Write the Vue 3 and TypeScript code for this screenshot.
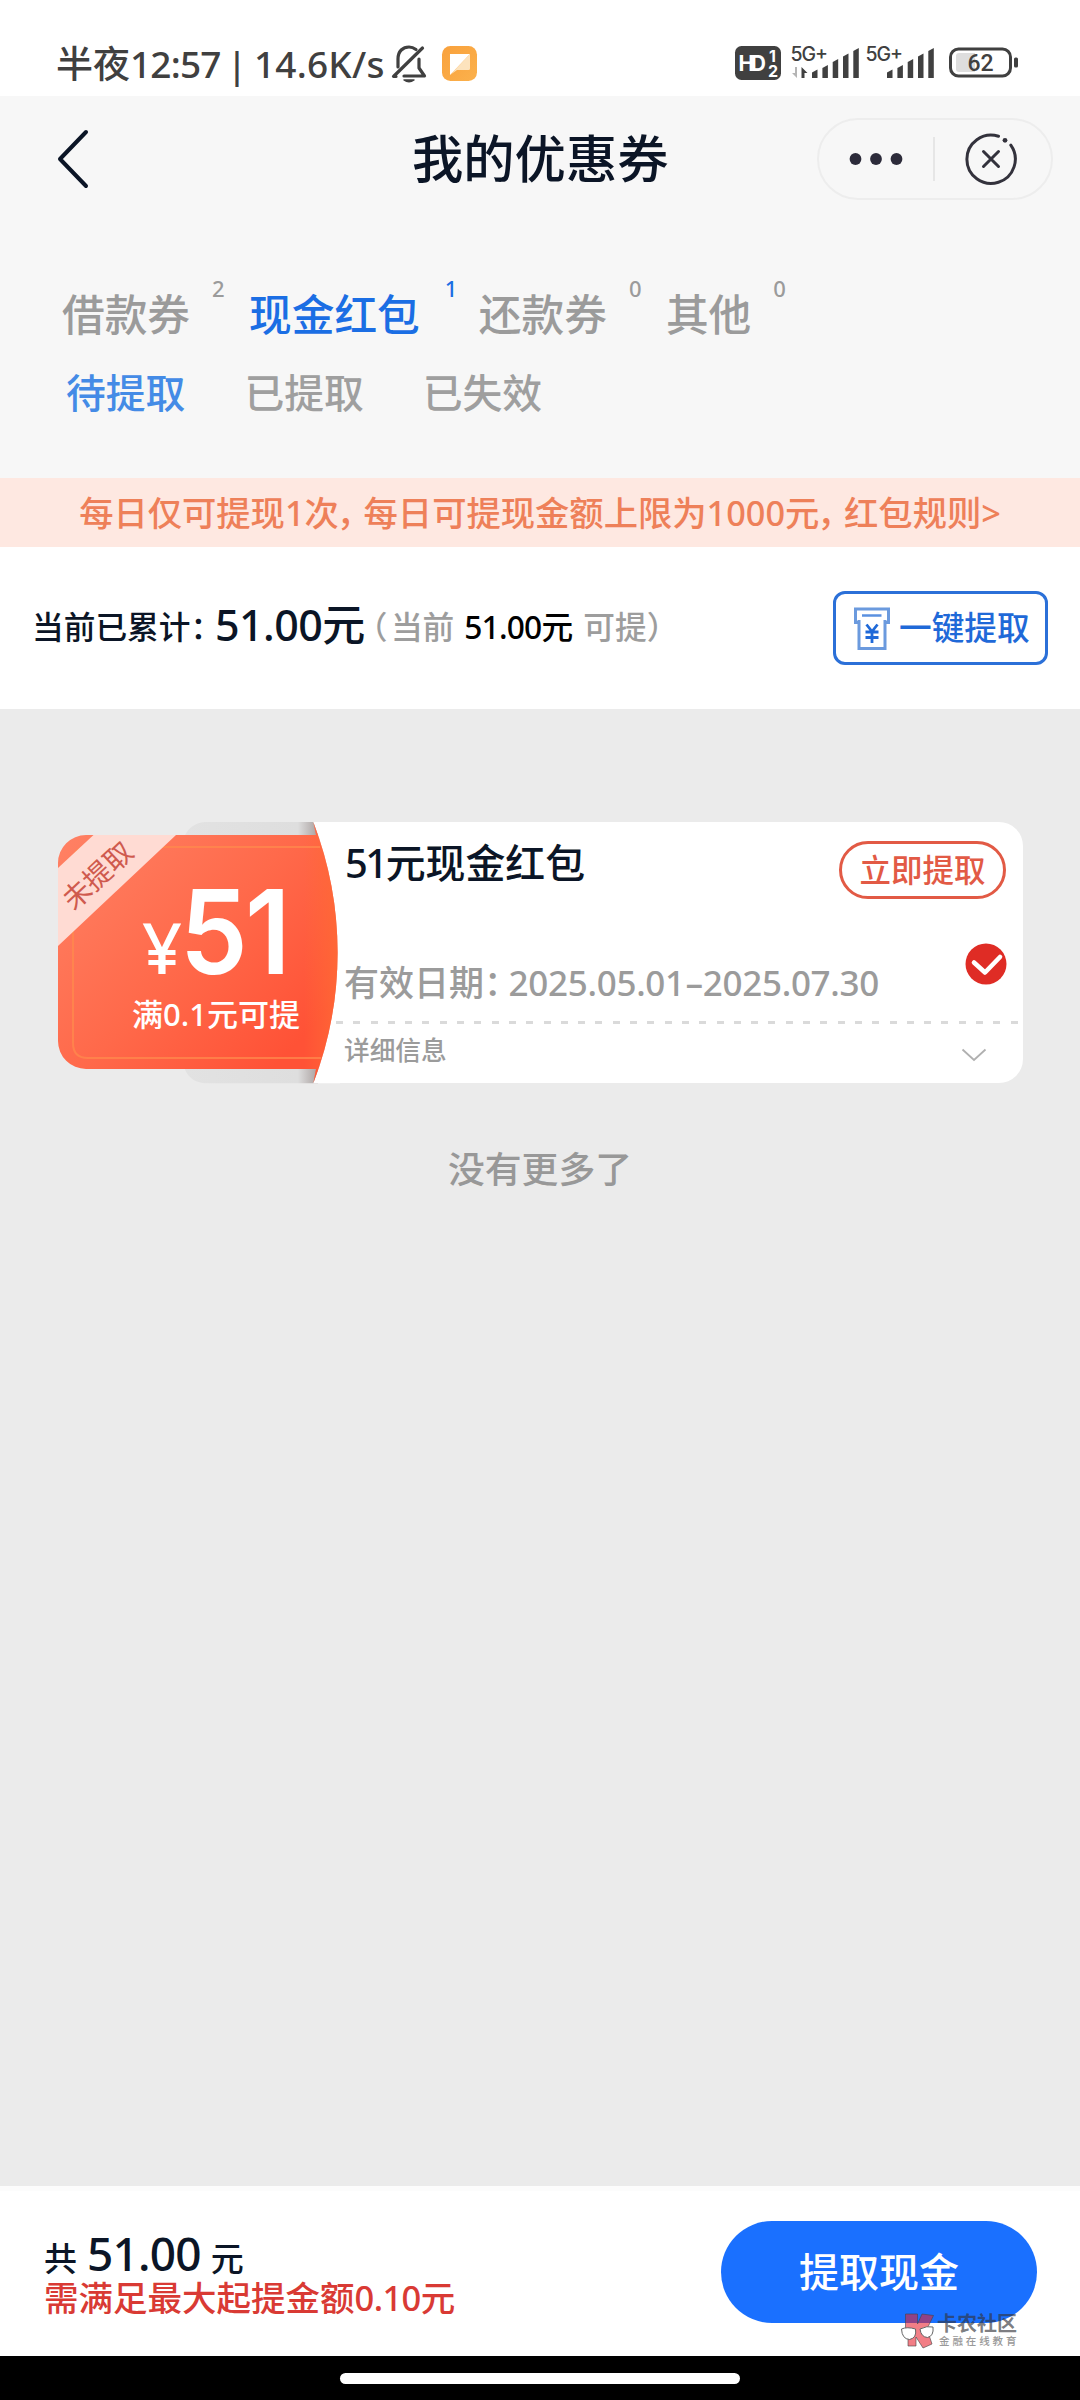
<script setup lang="ts">
interface Tab {
  label: string
  count: number
}

const tabs: Tab[] = [
  { label: '借款券', count: 2 },
  { label: '现金红包', count: 1 },
  { label: '还款券', count: 0 },
  { label: '其他', count: 0 },
]
const activeTab = 1

const filters: string[] = ['待提取', '已提取', '已失效']
const activeFilter = 0

// Left edge and top of each signal strength bar
const bars = [
  { x: 21, y: 23.5 },
  { x: 31.4, y: 19 },
  { x: 41.7, y: 13 },
  { x: 52, y: 7.5 },
  { x: 62.3, y: 2 },
]
const barPath = (x: number, y: number): string =>
  `M${x} ${y + 3}L${x + 5.5} ${y}V32H${x}Z`
</script>

<template>
  <div class="page">
    <header class="status">
      <span class="clock">半夜<i class="t">12:57</i><i class="bar">|</i><i class="net">14.6K/s</i></span>
      <svg class="bell" width="36" height="38" viewBox="0 0 36 38" fill="none" stroke="#404040" stroke-width="3.2" stroke-linecap="round" stroke-linejoin="round">
        <path d="M7 22V14C7 6 12 2 18 2C21 2 23 3 25 4.500" />
        <path d="M28 14V23L33.500 31H13" />
        <path d="M31.500 3L2.500 31.500H5" />
        <path d="M13 35H23Q18 38.500 13 35Z" fill="#404040" stroke-width="1.500" />
      </svg>
      <svg class="note" width="35" height="35" viewBox="0 0 35 35">
        <defs>
          <linearGradient id="noteBg" x1="0" y1="0" x2="1" y2="1">
            <stop offset="0" stop-color="#f9a13c" />
            <stop offset="1" stop-color="#fbb14c" />
          </linearGradient>
        </defs>
        <rect width="35" height="35" rx="8.500" fill="url(#noteBg)" />
        <path d="M8 8H28L8 29Z" fill="#fff" />
        <path d="M28 8V22.500Q28 24 26.500 24H15L8 29Z" fill="#fde3bd" />
      </svg>
      <div class="radio">
        <svg width="46" height="34" viewBox="0 0 46 34">
          <rect width="46" height="34" rx="6.500" fill="#404040" />
          <text x="3.500" y="24.500" class="hd" textLength="27.500">HD</text>
          <text x="34" y="15.500" class="hd-n">1</text>
          <text x="33" y="30.500" class="hd-n">2</text>
        </svg>
        <svg class="sig1" width="69" height="34" viewBox="0 0 69 34" fill="#404040">
          <text x="-0.500" y="15" class="g5" textLength="37.500">5G+</text>
          <path d="M6 21V32L1 27H4V21Z" fill="#b5b5b5" />
          <path d="M10.500 32V21L16.500 27H13.500V32Z" />
          <path v-for="b in bars" :key="b.x" :d="barPath(b.x, b.y)" />
        </svg>
        <svg class="sig2" width="69" height="34" viewBox="0 0 69 34" fill="#404040">
          <text x="-0.500" y="15" class="g5" textLength="37.500">5G+</text>
          <path v-for="b in bars" :key="b.x" :d="barPath(b.x, b.y)" />
        </svg>
        <svg class="battery" width="70" height="34" viewBox="0 0 70 34">
          <rect x="1.500" y="3" width="60" height="27" rx="8" fill="#fff" stroke="#404040" stroke-width="3" />
          <path d="M10 7H26V26H10Q7 26 7 23V10Q7 7 10 7Z" fill="#dedede" />
          <rect x="65" y="11.500" width="4" height="10" rx="1.500" fill="#404040" />
          <text x="31.500" y="25" text-anchor="middle" class="pct">62</text>
        </svg>
      </div>
    </header>

    <section class="head">
      <nav class="nav">
        <svg class="back" width="34" height="60" viewBox="0 0 34 60" fill="none" stroke="#0b1526" stroke-width="4" stroke-linecap="round" stroke-linejoin="round">
          <path d="M30 3L4 30L30 57" />
        </svg>
        <h1>我的优惠券</h1>
        <div class="capsule">
          <svg class="dots" width="56" height="14" viewBox="0 0 56 14" fill="#2c2b3a">
            <circle cx="7.500" cy="7" r="5.900" /><circle cx="28" cy="7" r="5.900" /><circle cx="48.500" cy="7" r="5.900" />
          </svg>
          <span class="split" />
          <svg class="close" width="54" height="54" viewBox="0 0 54 54" fill="none" stroke="#33323c" stroke-width="3" stroke-linecap="round">
            <path d="M34.500 4.200A24.200 24.200 0 1 0 46.800 13.200" />
            <path d="M19.500 19.500L34.500 34.500M34.500 19.500L19.500 34.500" />
            <circle cx="41" cy="8.300" r="2.400" fill="#33323c" stroke="none" />
          </svg>
        </div>
      </nav>
      <div class="tabs">
        <div v-for="(t, i) in tabs" :key="t.label" class="tab" :class="{ on: i === activeTab }">
          {{ t.label }}<sup>{{ t.count }}</sup>
        </div>
      </div>
      <div class="filters">
        <span v-for="(f, i) in filters" :key="f" :class="{ on: i === activeFilter }">{{ f }}</span>
      </div>
    </section>

    <div class="notice">
      <span>每日仅可提现1次<b class="p c">，</b>每日可提现金额上限为1000元<b class="p c">，</b>红包规则&gt;</span>
    </div>

    <section class="summary">
      <div class="sum-text">
        <span class="s-label">当前已累计<b class="p">：</b></span>
        <span class="s-total">51.00元</span>
        <span class="s-grey s-open"><b class="lp">（</b>当前</span>
        <span class="s-avail">51.00元</span>
        <span class="s-grey">可提）</span>
      </div>
      <button class="quick">
        <svg width="36" height="43" viewBox="0 0 36 43" fill="none" stroke="#6b9ade" stroke-width="3">
          <path d="M4.500 15.500H1.500V2H34.500V15.500H31.500" />
          <path d="M5 13V41.500H31V13" />
          <path d="M8 8.500H27.500" stroke="#5a90e0" stroke-width="2.500" />
          <path d="M12.500 17.500L18 24.500L23.500 17.500M11.500 25H24.500M11.500 30.500H24.500M18 24.500V36" stroke="#1f69d8" stroke-width="2.800" />
        </svg>
        <span>一键提取</span>
      </button>
    </section>

    <main class="list">
      <article class="coupon">
        <svg class="art" width="282" height="262" viewBox="0 0 282 262">
          <defs>
            <linearGradient id="red" x1="0" y1="0.100" x2="0.850" y2="0.850">
              <stop offset="0" stop-color="#ff8063" />
              <stop offset="0.550" stop-color="#ff694a" />
              <stop offset="1" stop-color="#ff5236" />
            </linearGradient>
            <linearGradient id="edge" x1="0" y1="0" x2="1" y2="0">
              <stop offset="0.880" stop-color="#ff6a35" stop-opacity="0" />
              <stop offset="1" stop-color="#ff6a35" stop-opacity="0.800" />
            </linearGradient>
            <linearGradient id="shade" x1="0" y1="0" x2="1" y2="0">
              <stop offset="0" stop-color="#e2e2e2" />
              <stop offset="0.850" stop-color="#dedede" />
              <stop offset="1" stop-color="#a9a09f" />
            </linearGradient>
          </defs>
          <path d="M147 0H260V261.300H147Q131 260 126 245V16Q131 1.500 147 0Z" fill="url(#shade)" />
          <path d="M255.300 0H282V261.300H255.300A364 364 0 0 0 255.300 0Z" fill="#fff" />
          <path d="M28 13H258L255.300 0A364 364 0 0 1 255.300 261.300L258 247H28A28 28 0 0 1 0 219V41A28 28 0 0 1 28 13Z" fill="url(#red)" />
          <path d="M28 13H258L255.300 0A364 364 0 0 1 255.300 261.300L258 247H28A28 28 0 0 1 0 219V41A28 28 0 0 1 28 13Z" fill="url(#edge)" />
          <path d="M262 25H30Q15 25 15 40V221Q15 236 30 236H263" fill="none" stroke="#ff8a4c" stroke-opacity="0.750" stroke-width="2" />
          <path d="M35.500 13H118L0 124V46Z" fill="#ffdbd3" />
          <text transform="translate(40 54) rotate(-43)" text-anchor="middle" y="9.500" class="ribbon">未提取</text>
        </svg>
        <div class="value">
          <div class="money"><i>¥</i><b>51</b></div>
          <div class="cond">满0.1元可提</div>
        </div>
        <div class="info">
          <div class="row-top">
            <h2><i>51</i>元现金红包</h2>
            <button class="take">立即提取</button>
          </div>
          <div class="row-date">
            <div class="date">有效日期<b class="p">：</b><i>2025.05.01</i><i class="dash">-</i><i>2025.07.30</i></div>
            <svg class="check" width="42" height="42" viewBox="0 0 42 42" fill="none">
              <circle cx="21" cy="21" r="20.500" fill="#df2c25" />
              <path d="M9 19.500L20 29.500L35 14" stroke="#fff" stroke-width="4.600" stroke-linecap="round" stroke-linejoin="round" />
            </svg>
          </div>
          <div class="rule" />
          <div class="row-more">
            <span>详细信息</span>
            <svg width="26" height="14" viewBox="0 0 26 14" fill="none" stroke="#b0b0b0" stroke-width="1.800"><path d="M1.500 1.500L13 12L24.500 1.500" /></svg>
          </div>
        </div>
      </article>
      <p class="end">没有更多了</p>
    </main>

    <footer class="foot">
      <div class="total">
        <div class="line1">共<b>51.00</b>元</div>
        <div class="line2">需满足最大起提金额<i>0.10</i>元</div>
      </div>
      <button class="cash">提取现金</button>
      <div class="mark">
        <svg width="36" height="36" viewBox="0 0 36 36">
          <path d="M5.500 1H17.500V11L22 1L33.500 2.500L27 16L32 31L23 35L16 24V33H8V24L5.500 15Z" fill="#e8202f" fill-opacity="0.580" stroke="#444" stroke-opacity="0.600" />
          <path d="M1.500 16Q7 13.500 15.500 16Q17 25 9.500 26.500Q2 26 1.500 16Z" fill="#fff" stroke="#666" />
          <path d="M20 16Q27 12.500 33 14Q34 23 27.500 24.500Q21 24 20 16Z" fill="#fff" stroke="#666" />
        </svg>
        <div>
          <strong>卡农社区</strong>
          <em>金融在线教育</em>
        </div>
      </div>
    </footer>
    <div class="gesture"><span /></div>
  </div>
</template>

<style>
body {
  margin: 0;
}
</style>

<style scoped>
.page {
  width: 1080px;
  height: 2400px;
  display: flex;
  flex-direction: column;
  overflow: hidden;
  background: #fff;
  font-family: "Noto Sans", "Noto Sans CJK SC", sans-serif;
  font-weight: 500;
  white-space: nowrap;
}
i,
em {
  font-style: normal;
}
button {
  font: inherit;
  margin: 0;
  padding: 0;
  box-sizing: border-box;
  background: none;
  border: 0;
}
svg {
  display: block;
  flex: none;
  overflow: visible;
}
.p {
  font-weight: inherit;
  margin-right: -0.27em;
}
.c {
  margin-left: -0.06em;
  margin-right: -0.22em;
}

/* status bar */
.status {
  height: 96px;
  flex: none;
  display: flex;
  align-items: flex-start;
  color: #404040;
}
.clock {
  display: flex;
  margin: 39px 0 0 56px;
  width: 335px;
  font-size: 37px;
  line-height: 50px;
}
.t {
  width: 93px;
  letter-spacing: -0.800px;
}
.bar {
  width: 28px;
  text-align: center;
}
.net {
  margin-left: 3px;
  letter-spacing: 0.200px;
}
.bell {
  margin-top: 45px;
}
.note {
  margin: 46px 0 0 15px;
}
.radio {
  margin: 46px 0 0 258px;
  display: flex;
}
.hd {
  font: 700 21px "Inter", sans-serif;
  fill: #fff;
}
.hd-n {
  font: 700 16px "Inter", sans-serif;
  fill: #fff;
}
.g5 {
  font: 500 19.500px "Inter", sans-serif;
}
.pct {
  font: 500 23px "Roboto", sans-serif;
  fill: #404040;
}
.sig1 {
  margin-left: 10px;
}
.sig2 {
  margin-left: 6px;
}
.battery {
  margin-left: 14px;
}

/* header */
.head {
  height: 382px;
  flex: none;
  background: #f7f7f7;
}
.nav {
  height: 126px;
  display: flex;
  align-items: center;
}
.back {
  margin-left: 56px;
}
h1 {
  margin: -3px 0 0 322px;
  width: 405px;
  font-size: 51.300px;
  line-height: 70px;
  font-weight: 500;
  color: #0b1526;
}
.capsule {
  width: 236px;
  height: 82px;
  box-sizing: border-box;
  border: 2px solid #ededed;
  border-radius: 41px;
  display: flex;
  align-items: center;
}
.dots {
  margin-left: 29px;
}
.split {
  width: 2px;
  height: 44px;
  margin-left: 29px;
  background: #e6e6e6;
}
.close {
  margin-left: 29px;
}
.tabs {
  display: flex;
  gap: 59px;
  padding: 63px 0 0 62px;
}
.tab {
  position: relative;
  font-size: 42.700px;
  line-height: 60px;
  color: #9b9b9b;
}
.tab sup {
  position: absolute;
  left: calc(100% + 22px);
  top: -12px;
  font-size: 22px;
  line-height: 30px;
}
.tab.on {
  color: #1b6ee4;
}
.tab.on sup {
  left: calc(100% + 25px);
}
.filters {
  display: flex;
  gap: 59px;
  padding: 23px 0 0 66px;
  font-size: 39.800px;
  line-height: 50px;
  color: #9f9f9f;
}
.filters .on {
  color: #448be6;
}

.notice {
  height: 69px;
  flex: none;
  background: #fee8e1;
  color: #ee8059;
  font-size: 34.300px;
  line-height: 69px;
  text-align: center;
}

.summary {
  height: 162px;
  flex: none;
  display: flex;
  align-items: center;
  justify-content: space-between;
  padding: 0 32px 0 32px;
}
.sum-text {
  display: flex;
  align-items: center;
  margin-top: -2px;
  font-size: 31.700px;
  line-height: 60px;
  color: #0b1526;
}
.s-total {
  font-size: 43px;
  margin: -4px 0 0 1.500px;
  letter-spacing: -0.600px;
}
.s-grey {
  color: #9d9d9d;
}
.s-open {
  margin-left: 7px;
}
.lp {
  font-weight: inherit;
  margin: 0 3.500px 0 -0.500em;
}
.s-avail {
  color: #000;
  margin: 0 11px 0 10px;
  letter-spacing: -0.800px;
}
.quick {
  width: 215px;
  height: 74px;
  border: 3px solid #2b70d8;
  border-radius: 12px;
  display: flex;
  align-items: center;
  padding-left: 18px;
  color: #1f69d8;
  font-size: 32.700px;
  line-height: 60px;
}
.quick span {
  margin-left: 9px;
}

/* coupon list */
.list {
  height: 1477px;
  flex: none;
  background: #ebebeb;
}
.list::before {
  content: "";
  display: table;
}
.coupon {
  display: flex;
  width: 965px;
  height: 261px;
  margin: 113px 0 0 58px;
}
.art {
  margin-right: -282px;
}
.ribbon {
  font-size: 28px;
  font-weight: 400;
  fill: #cf5a4e;
}
.value {
  position: relative;
  width: 282px;
  color: #fff;
}
.money {
  display: flex;
  align-items: baseline;
  height: 160px;
  margin: 30px 0 0 84px;
  line-height: 160px;
}
.money i {
  width: 38px;
  font-size: 70px;
}
.money b {
  font-family: "Inter", sans-serif;
  font-size: 117px;
  font-weight: 600;
  letter-spacing: -3px;
  transform: scaleX(0.920);
  transform-origin: left;
}
.cond {
  margin: -23px 0 0 74px;
  font-size: 31px;
  line-height: 50px;
}
.info {
  flex: 1;
  background: #fff;
  border-radius: 0 24px 24px 0;
}
.row-top {
  display: flex;
  align-items: flex-start;
  justify-content: space-between;
  padding: 16px 17px 0 5px;
}
h2 {
  margin: 0;
  font-size: 39.900px;
  line-height: 50px;
  font-weight: 500;
  color: #0b1526;
}
h2 i {
  letter-spacing: -2.500px;
}
.take {
  width: 167px;
  height: 58px;
  margin-top: 3px;
  border: 3px solid #e25a45;
  border-radius: 29px;
  color: #e25a45;
  font-size: 31.500px;
  line-height: 50px;
}
.row-date {
  display: flex;
  justify-content: space-between;
  padding: 44px 16px 0 4px;
  height: 56px;
  font-size: 35px;
  line-height: 34px;
  color: #9b9b9b;
}
.date {
  display: flex;
  padding-top: 23px;
}
.date i {
  margin-left: -1px;
  letter-spacing: -0.300px;
}
.date .dash {
  width: 20px;
  text-align: center;
  transform: scaleX(1.700);
}
.rule {
  height: 3px;
  margin: 22px 4px 0 -4px;
  background: repeating-linear-gradient(90deg, #dadada 0 7px, transparent 7px 17.300px);
}
.row-more {
  display: flex;
  align-items: center;
  justify-content: space-between;
  padding: 7px 36px 0 4px;
  font-size: 25.700px;
  line-height: 40px;
  color: #9b9b9b;
}
.row-more svg {
  margin-top: 7px;
}
.end {
  margin: 61px 0 0;
  text-align: center;
  font-size: 36.800px;
  line-height: 50px;
  color: #989898;
}

/* bottom bar */
.foot {
  position: relative;
  height: 170px;
  flex: none;
  display: flex;
  align-items: flex-start;
  justify-content: space-between;
  background: linear-gradient(#fcfcfc 5px, #fff 5px);
}
.total {
  padding: 39px 0 0 44px;
}
.line1 {
  font-size: 33px;
  line-height: 56px;
  color: #0b1526;
}
.line1 b {
  font-size: 46px;
  font-weight: 500;
  letter-spacing: -0.800px;
  margin: 0 10px;
}
.line2 {
  font-size: 34.500px;
  line-height: 50px;
  margin-top: -14px;
  color: #d93a34;
}
.line2 i {
  letter-spacing: -0.600px;
}
.cash {
  width: 316px;
  height: 102px;
  margin: 35px 43px 0 0;
  border-radius: 51px;
  background: #1a70ff;
  color: #fff;
  font-size: 40px;
  line-height: 100px;
}
.mark {
  position: absolute;
  left: 900px;
  top: 127px;
  display: flex;
}
.mark strong {
  display: block;
  margin: 0 0 0 1px;
  font-size: 20px;
  line-height: 22px;
  font-weight: 700;
  color: rgba(50, 50, 55, 0.650);
}
.mark em {
  display: block;
  margin: 0 0 0 3px;
  font-size: 10.500px;
  line-height: 13px;
  letter-spacing: 2.900px;
  color: #999;
}
.gesture {
  height: 44px;
  flex: none;
  background: #000;
  display: flex;
  justify-content: center;
}
.gesture span {
  width: 400px;
  height: 11px;
  margin-top: 17px;
  border-radius: 6px;
  background: #fff;
}
</style>
